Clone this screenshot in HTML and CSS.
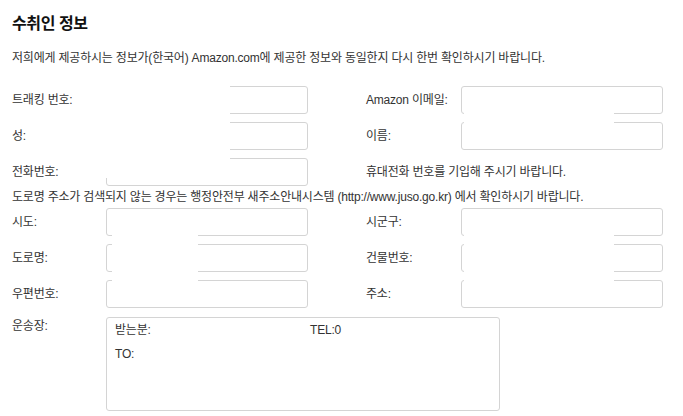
FILE: index.html
```html
<!DOCTYPE html>
<html lang="ko">
<head>
<meta charset="utf-8">
<link rel="stylesheet" href="styles.css">
</head>
<body>
<div class="page">
  <h2 class="title">수취인 정보</h2>
  <p class="note">저희에게 제공하시는 정보가(한국어) Amazon.com에 제공한 정보와 동일한지 다시 한번 확인하시기 바랍니다.</p>

  <div class="grid upper">
    <span class="label">트래킹 번호:</span>
    <div class="field"></div>
    <span class="spacer"></span>
    <span class="label">Amazon 이메일:</span>
    <div class="field"></div>

    <span class="label">성:</span>
    <div class="field"></div>
    <span class="spacer"></span>
    <span class="label">이름:</span>
    <div class="field"></div>

    <span class="label">전화번호:</span>
    <div class="field"></div>
    <span class="spacer"></span>
    <span class="label hint">휴대전화 번호를 기입해 주시기 바랍니다.</span>

    <span class="mask mask-ul"></span>
    <span class="mask mask-ur"></span>
  </div>

  <p class="note2">도로명 주소가 검색되지 않는 경우는 행정안전부 새주소안내시스템 (http://www.juso.go.kr) 에서 확인하시기 바랍니다.</p>

  <div class="grid lower">
    <span class="label">시도:</span>
    <div class="field"></div>
    <span class="spacer"></span>
    <span class="label">시군구:</span>
    <div class="field"></div>

    <span class="label">도로명:</span>
    <div class="field"></div>
    <span class="spacer"></span>
    <span class="label">건물번호:</span>
    <div class="field"></div>

    <span class="label">우편번호:</span>
    <div class="field"></div>
    <span class="spacer"></span>
    <span class="label">주소:</span>
    <div class="field"></div>

    <span class="mask mask-l1"></span>
    <span class="mask mask-l2"></span>
    <span class="mask mask-r1"></span>
    <span class="mask mask-r2"></span>
  </div>

  <div class="waybill">
    <span class="label top">운송장:</span>
    <div class="waybill-box">
      <div class="wb-row">
        <span class="wb-to">받는분:</span>
        <span class="wb-tel">TEL:0</span>
      </div>
      <div class="wb-row">TO:</div>
    </div>
  </div>
</div>
</body>
</html>
```

FILE: styles.css
```css
html, body {
  margin: 0;
  padding: 0;
  background: #fff;
}

body {
  font-family: "Liberation Sans", "Noto Sans CJK KR", sans-serif;
  font-size: 12px;
  color: #333;
  letter-spacing: -0.2px;
}

.page {
  padding: 14px 0 0 12px;
}

.title {
  margin: 0;
  font-size: 16px;
  line-height: 20px;
  font-weight: bold;
  color: #111;
  letter-spacing: -0.4px;
}

.note {
  margin: 14px 0 0;
  line-height: 20px;
}

.grid {
  position: relative;
  display: grid;
  grid-template-columns: 94px 202px 58px 95px 202px;
  grid-auto-rows: 28px;
  row-gap: 8px;
  align-items: center;
}

.upper {
  margin-top: 18px;
}

.label {
  line-height: 16px;
  white-space: nowrap;
}

.hint {
  grid-column: 4 / 6;
}

.field {
  height: 28px;
  box-sizing: border-box;
  border: 1px solid #d4d4d4;
  border-radius: 3px;
  background: #fff;
}

.mask {
  position: absolute;
  background: #fff;
}

.mask-ul {
  left: 94px;
  width: 124px;
  top: -6px;
  height: 98px;
}

.mask-ur {
  left: 452px;
  width: 150px;
  top: 26px;
  height: 11px;
}

.mask-l1 {
  left: 100px;
  width: 86px;
  top: 26px;
  height: 11px;
}

.mask-l2 {
  left: 100px;
  width: 86px;
  top: 62px;
  height: 11px;
}

.mask-r1 {
  left: 452px;
  width: 150px;
  top: 26px;
  height: 11px;
}

.mask-r2 {
  left: 452px;
  width: 150px;
  top: 62px;
  height: 11px;
}

.note2 {
  margin: 0;
  line-height: 22px;
}

.waybill {
  display: grid;
  grid-template-columns: 94px 394px;
  margin-top: 9px;
}

.label.top {
  padding-top: 1px;
}

.waybill-box {
  height: 94px;
  box-sizing: border-box;
  border: 1px solid #d4d4d4;
  border-radius: 3px;
  padding: 4px 8px;
}

.wb-row {
  display: flex;
  line-height: 16px;
  margin-bottom: 8px;
}

.wb-to {
  width: 195px;
}
```
